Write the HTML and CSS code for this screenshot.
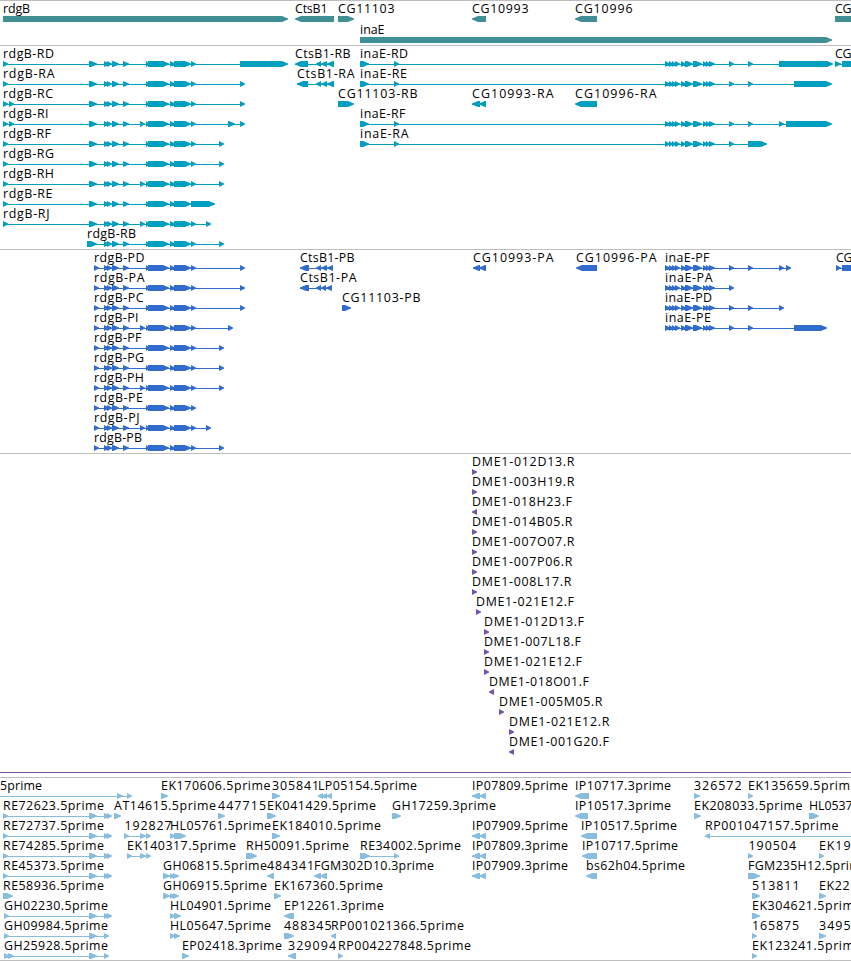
FILE: index.html
```html
<!DOCTYPE html>
<html lang="en">
<head>
<meta charset="utf-8">
<title>Genome tracks</title>
<link rel="stylesheet" href="styles.css">
</head>
<body>
<main class="browser">
  <section class="track track-genes"><svg id="genes" width="851" height="44"></svg></section>
  <section class="track track-transcripts"><svg id="transcripts" width="851" height="203"></svg></section>
  <section class="track track-proteins"><svg id="proteins" width="851" height="203"></svg></section>
  <section class="track track-bacs"><svg id="bacs" width="851" height="318"></svg><div class="span-line"></div></section>
  <section class="track track-ests"><svg id="ests" width="851" height="182"></svg></section>
</main>
<script src="tracks.js"></script>
</body>
</html>
```
FILE: styles.css
```css
body {
  margin: 0;
  background: #fff;
  overflow: hidden;
}

.browser {
  display: flex;
  flex-direction: column;
  width: 851px;
  height: 960px;
  border-bottom: 1px solid #bebebe;
}

.track {
  flex: none;
  box-sizing: border-box;
  border-top: 1px solid #bebebe;
  overflow: hidden;
}

.track svg {
  display: block;
}

.track-genes { height: 45px; color: #408f95; }
.track-transcripts { height: 204px; color: #009fc0; }
.track-proteins { height: 204px; color: #316ccd; }
.track-bacs { height: 324px; color: #7557aa; }
.track-ests { height: 183px; color: #89bddd; }

.span-line {
  height: 1px;
  background: #7557aa;
}

.label {
  font-family: "Open Sans", "Noto Sans", sans-serif;
  font-size: 12.4px;
  fill: #000;
}

.feature {
  fill: currentColor;
}
```
FILE: tracks.js
```js
const NS = "http://www.w3.org/2000/svg";

function add(svg, name, attrs, text) {
  const el = document.createElementNS(NS, name);
  for (const key in attrs) el.setAttribute(key, attrs[key]);
  if (text) el.textContent = text;
  svg.appendChild(el);
}

// Each feature: [label baseline, label start, label end, label, exons, strand]
// Exons are "start-end" pairs; a trailing "~" on the list extends the line off the right edge.
function draw(id, features) {
  const svg = document.getElementById(id);
  for (const [y, x, end, label, exonList, strand] of features) {
    const exons = exonList.replace("~", "").trim().split(/\s+/).map(e => e.split(":").map(Number));
    const from = exons[0][0];
    const to = exonList.endsWith("~") ? 870 : exons[exons.length - 1][1];
    if (exons.length > 1 || exonList.endsWith("~")) {
      add(svg, "rect", { class: "feature", x: from, y: y + 6, width: to - from - 1, height: 1 });
    }
    let d = "";
    for (const [a, b] of exons) {
      const head = Math.min(b - a, 6);
      const t = y + 3;
      if (strand === "-") d += `M${b} ${t}H${a + head}L${a} ${t + 2.5}V${t + 3.5}L${a + head} ${t + 6}H${b}z`;
      else d += `M${b - head} ${t}L${b} ${t + 2.5}V${t + 3.5}L${b - head} ${t + 6}H${a}V${t}z`;
    }
    add(svg, "path", { class: "feature", d });
    add(svg, "text", { class: "label", x: x, y: y, textLength: end - x + 0.5 }, label);
  }
}

draw("genes", [
  [12, 3, 29.5, "rdgB", "3:288"],
  [12, 295, 327, "CtsB1", "295:334", "-"],
  [12, 338, 394, "CG11103", "338:354"],
  [12, 472, 528, "CG10993", "472:486", "-"],
  [12, 575, 632, "CG10996", "575:597", "-"],
  [12, 835, 851, "CG", "835:870"],
  [33, 360, 384, "inaE", "360:832"]
]);

const mid = "104:109 107:112 112:119";
const tail = "146:149 148:169 170:175 174:191";
const lead = "3:8 89:97 " + mid + " 123:129 ";
const rows = (first, n) => first + n * 20;
const ina = "665:670 669:673 672:676 675:680 681:686 685:693 693:702 703:707 706:710 709:715 729:734 ";

draw("transcripts", [
  [12, 3, 53.5, "rdgB-RD", lead + tail + " 191:196 240:288"],
  [rows(12, 1), 3, 54, "rdgB-RA", lead + tail + " 191:196 240:245"],
  [rows(12, 2), 3, 52.5, "rdgB-RC", "3:8 9:14 89:97 " + mid + " 123:129 " + tail + " 191:196 240:245"],
  [rows(12, 3), 3, 48, "rdgB-RI", "3:8 9:14 89:97 " + mid + " 123:129 140:145 " + tail + " 191:196 228:235 240:245"],
  [rows(12, 4), 3, 50.5, "rdgB-RF", lead + tail + " 191:196 219:224"],
  [rows(12, 5), 3, 53.5, "rdgB-RG", lead + tail + " 191:196 219:224"],
  [rows(12, 6), 3, 53.5, "rdgB-RH", lead + "140:145 " + tail + " 191:196 219:224"],
  [rows(12, 7), 3, 52, "rdgB-RE", lead + tail + " 191:215"],
  [rows(12, 8), 3, 49, "rdgB-RJ", lead + "140:145 " + tail + " 191:196 206:211"],
  [rows(12, 9), 87, 135.5, "rdgB-RB", "87:97 " + mid + " 123:129 " + tail + " 191:196 219:224"],
  [12, 295, 350, "CtsB1-RB", "295:308 316:321 321:327 327:334", "-"],
  [32, 297, 354, "CtsB1-RA", "297:308 316:321 321:327 327:334", "-"],
  [52, 338, 417, "CG11103-RB", "338:354"],
  [52, 472, 553, "CG10993-RA", "472:480 479:486", "-"],
  [52, 575, 656, "CG10996-RA", "575:597", "-"],
  [12, 360, 407.5, "inaE-RD", "360:369 394:399 " + ina + "748:753 779:833"],
  [32, 360, 406.5, "inaE-RE", "360:369 394:399 " + ina + "748:753 794:832"],
  [72, 360, 405, "inaE-RF", "360:369 394:399 " + ina + "748:753 779:784 786:832"],
  [92, 360, 408, "inaE-RA", "360:369 394:399 " + ina + "748:767"],
  [12, 835, 851, "CG", "835:841 842:870"]
]);

const plead = "94:99 " + mid + " 123:129 ";

draw("proteins", [
  [12, 94, 144, "rdgB-PD", plead + tail + " 191:196 240:245"],
  [32, 94, 144, "rdgB-PA", plead + tail + " 191:196 240:245"],
  [52, 94, 143, "rdgB-PC", plead + tail + " 191:196 240:245"],
  [72, 94, 138, "rdgB-PI", plead + "140:145 " + tail + " 191:196 228:233"],
  [92, 94, 141, "rdgB-PF", plead + tail + " 191:196 219:224"],
  [112, 94, 143.5, "rdgB-PG", plead + tail + " 191:196 219:224"],
  [132, 94, 143.5, "rdgB-PH", plead + "140:145 " + tail + " 191:196 219:224"],
  [152, 94, 142.5, "rdgB-PE", plead + tail + " 191:196"],
  [172, 94, 139, "rdgB-PJ", plead + "140:145 " + tail + " 191:196 206:211"],
  [192, 94, 141.5, "rdgB-PB", plead + tail + " 191:196 219:224"],
  [12, 300, 354, "CtsB1-PB", "300:309 316:321 321:327 327:333", "-"],
  [32, 300, 356, "CtsB1-PA", "300:309 316:321 321:326 326:332", "-"],
  [52, 342, 420, "CG11103-PB", "342:351"],
  [12, 473, 553, "CG10993-PA", "473:480 479:486", "-"],
  [12, 576, 656, "CG10996-PA", "576:597", "-"],
  [12, 665, 709, "inaE-PF", ina + "748:753 779:784 786:791"],
  [32, 665, 712, "inaE-PA", ina],
  [52, 665, 711.5, "inaE-PD", ina + "748:753 779:784"],
  [72, 665, 710.5, "inaE-PE", ina + "748:753 794:827"],
  [12, 836, 852, "CG", "836:841 842:870"]
]);

draw("bacs", [
  [472, 574, "DME1-012D13.R", "+"],
  [472, 574, "DME1-003H19.R", "+"],
  [472, 571.5, "DME1-018H23.F", "-"],
  [472, 572, "DME1-014B05.R", "+"],
  [472, 574, "DME1-007O07.R", "+"],
  [472, 572, "DME1-007P06.R", "+"],
  [472, 571, "DME1-008L17.R", "+"],
  [476, 573.5, "DME1-021E12.F", "+"],
  [484, 583.5, "DME1-012D13.F", "+"],
  [484, 580.5, "DME1-007L18.F", "+"],
  [484, 581.5, "DME1-021E12.F", "+"],
  [489, 588.5, "DME1-018O01.F", "-"],
  [499, 602, "DME1-005M05.R", "+"],
  [509, 609, "DME1-021E12.R", "+"],
  [509, 608.5, "DME1-001G20.F", "-"]
].map(([x, end, label, strand], i) => [12 + i * 20, x, end, label, `${x}:${x + 5}`, strand]));

const est = [
  [
    [0, 41.5, "5prime", "-10:-5 117:123 127:132"],
    [161, 270, "EK170606.5prime", "161:168"],
    [272, 318.5, "305841", "272:280"],
    [318, 416.5, "LP05154.5prime", "318:323 322:327 326:332", "-"],
    [472, 567.5, "IP07809.5prime", "472:480 479:486", "-"],
    [575, 670.5, "IP10717.3prime", "575:589", "-"],
    [694, 741, "326572", "694:700"],
    [748, 857, "EK135659.5prime", "748:753"]
  ],
  [
    [3, 103.5, "RE72623.5prime", "3:8 89:97 104:109 107:112"],
    [114, 215.5, "AT14615.5prime", "114:121"],
    [218, 265.5, "447715", "218:225"],
    [267, 375.5, "EK041429.5prime", "267:276"],
    [392, 495.5, "GH17259.3prime", "392:401"],
    [575, 670.5, "IP10517.3prime", "575:588", "-"],
    [694, 802, "EK208033.5prime", "694:701"],
    [809, 852, "HL0537", "809:819"]
  ],
  [
    [3, 103.5, "RE72737.5prime", "3:8 89:97 104:109 107:112"],
    [124.5, 171, "192827", "124:129 140:146 146:151"],
    [170, 270.5, "HL05761.5prime", "170:175 174:186"],
    [272, 380.5, "EK184010.5prime", "272:280"],
    [472, 567.5, "IP07909.5prime", "472:480 479:486", "-"],
    [581, 676.5, "IP10517.5prime", "581:597", "-"],
    [705, 838, "RP001047157.5prime", "705:710~", "-"]
  ],
  [
    [3, 103.5, "RE74285.5prime", "3:8 89:97 104:109 107:112"],
    [127, 235.5, "EK140317.5prime", "127:132 140:146 146:151"],
    [246, 348.5, "RH50091.5prime", "246:257"],
    [360, 460.5, "RE34002.5prime", "360:370 394:399"],
    [472, 567.5, "IP07809.3prime", "472:480 479:486", "-"],
    [582, 677.5, "IP10717.5prime", "582:597", "-"],
    [748.5, 795.5, "190504", "748:753"],
    [819, 850, "EK19", "819:824"]
  ],
  [
    [3, 103.5, "RE45373.5prime", "3:8 89:97 104:109 107:112"],
    [163, 266.5, "GH06815.5prime", "163:170 170:175 173:179"],
    [267, 313.5, "484341", "267:274", "-"],
    [314, 433.5, "FGM302D10.3prime", "314:321 320:327", "-"],
    [472, 567.5, "IP07909.3prime", "472:480 479:486", "-"],
    [586, 684.5, "bs62h04.5prime", "586:597", "-"],
    [748, 867.5, "FGM235H12.5prime", "748:760"]
  ],
  [
    [3, 103.5, "RE58936.5prime", "3:13"],
    [163, 266.5, "GH06915.5prime", "163:170 170:175 173:179"],
    [274, 382.5, "EK167360.5prime", "274:281"],
    [752, 799, "513811", "752:760"],
    [819, 849, "EK22", "819:826"]
  ],
  [
    [4, 107.5, "GH02230.5prime", "4:9 89:97 104:109 107:112"],
    [170, 270.5, "HL04901.5prime", "170:175 174:181"],
    [284, 383.5, "EP12261.3prime", "284:294", "-"],
    [752, 861, "EK304621.5prime", "752:760"]
  ],
  [
    [4, 107.5, "GH09984.5prime", "4:9 89:97 104:109"],
    [170, 270.5, "HL05647.5prime", "170:175 174:180"],
    [284, 331, "488345", "284:294"],
    [331, 463.5, "RP001021366.5prime", "331:336", "-"],
    [752, 798.5, "165875", "752:757"],
    [819, 850, "3495", "819:826"]
  ],
  [
    [4, 107.5, "GH25928.5prime", "4:9 8:14 89:97 104:109"],
    [182, 281.5, "EP02418.3prime", "182:189"],
    [288, 335.5, "329094", "288:296", "-"],
    [338, 470.5, "RP004227848.5prime", "338:343"],
    [752, 861, "EK123241.5prime", "752:757"]
  ]
];

draw("ests", est.flatMap((row, i) => row.map(f => [12 + i * 20, ...f])));
```
